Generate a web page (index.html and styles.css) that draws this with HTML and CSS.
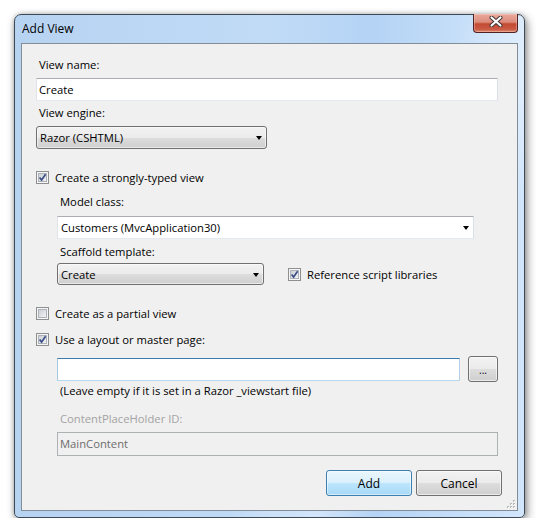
FILE: index.html
```html
<!DOCTYPE html>
<html>
<head>
<meta charset="utf-8">
<title>Add View</title>
<link rel="stylesheet" href="styles.css">
</head>
<body>
<div class="page">
  <div class="window">
    <div class="titlebar">
      <span class="title">Add View</span>
      <div class="close">
        <svg width="14" height="11" viewBox="0 0 14 11">
          <path d="M2.5 1.5 L11.5 9.5 M11.5 1.5 L2.5 9.5" stroke="#3a3030" stroke-width="4" stroke-linecap="round"/>
          <path d="M2.5 1.5 L11.5 9.5 M11.5 1.5 L2.5 9.5" stroke="#ffffff" stroke-width="2.2" stroke-linecap="round"/>
        </svg>
      </div>
    </div>
    <div class="client">
      <div class="lbl m-first">View name:</div>
      <div class="tb w-name m5">Create</div>
      <div class="lbl m4">View engine:</div>
      <div class="dd w-engine m5"><span>Razor (CSHTML)</span><span class="arrow"></span></div>

      <div class="chk m20">
        <svg class="cb" width="13" height="13" viewBox="0 0 13 13"><defs><linearGradient id="g1" x1="0" y1="0" x2="1" y2="1"><stop offset="0" stop-color="#c9cdd4"/><stop offset="1" stop-color="#f4f5f6"/></linearGradient></defs><rect x="0.5" y="0.5" width="12" height="12" fill="#f6f6f6" stroke="#8e8f8f"/><rect x="2.5" y="2.5" width="8" height="8" fill="url(#g1)" stroke="#aeb3b9"/><path d="M3.6 6.4 L5.6 9 L9.6 3.2" fill="none" stroke="#3c4f86" stroke-width="1.7"/></svg>
        <span>Create a strongly-typed view</span>
      </div>

      <div class="indent">
        <div class="lbl m9">Model class:</div>
        <div class="tb combo w-model m6"><span>Customers (MvcApplication30)</span><span class="arrow"></span></div>
        <div class="lbl m5">Scaffold template:</div>
        <div class="scaffold-row m3">
          <div class="dd w-scaffold"><span>Create</span><span class="arrow"></span></div>
          <div class="chk">
            <svg class="cb" width="13" height="13" viewBox="0 0 13 13"><defs><linearGradient id="g2" x1="0" y1="0" x2="1" y2="1"><stop offset="0" stop-color="#c9cdd4"/><stop offset="1" stop-color="#f4f5f6"/></linearGradient></defs><rect x="0.5" y="0.5" width="12" height="12" fill="#f6f6f6" stroke="#8e8f8f"/><rect x="2.5" y="2.5" width="8" height="8" fill="url(#g2)" stroke="#aeb3b9"/><path d="M3.6 6.4 L5.6 9 L9.6 3.2" fill="none" stroke="#3c4f86" stroke-width="1.7"/></svg>
            <span>Reference script libraries</span>
          </div>
        </div>
      </div>

      <div class="chk m20">
        <svg class="cb" width="13" height="13" viewBox="0 0 13 13"><defs><linearGradient id="g3" x1="0" y1="0" x2="1" y2="1"><stop offset="0" stop-color="#c9cdd4"/><stop offset="1" stop-color="#f4f5f6"/></linearGradient></defs><rect x="0.5" y="0.5" width="12" height="12" fill="#f6f6f6" stroke="#8e8f8f"/><rect x="2.5" y="2.5" width="8" height="8" fill="url(#g3)" stroke="#aeb3b9"/></svg>
        <span>Create as a partial view</span>
      </div>

      <div class="chk m10">
        <svg class="cb" width="13" height="13" viewBox="0 0 13 13"><defs><linearGradient id="g4" x1="0" y1="0" x2="1" y2="1"><stop offset="0" stop-color="#c9cdd4"/><stop offset="1" stop-color="#f4f5f6"/></linearGradient></defs><rect x="0.5" y="0.5" width="12" height="12" fill="#f6f6f6" stroke="#8e8f8f"/><rect x="2.5" y="2.5" width="8" height="8" fill="url(#g4)" stroke="#aeb3b9"/><path d="M3.6 6.4 L5.6 9 L9.6 3.2" fill="none" stroke="#3c4f86" stroke-width="1.7"/></svg>
        <span>Use a layout or master page:</span>
      </div>

      <div class="indent">
        <div class="layout-row m9">
          <div class="tb focus w-layout"></div>
          <div class="btn browse">...</div>
        </div>
        <div class="lbl m1">(Leave empty if it is set in a Razor _viewstart file)</div>
        <div class="lbl disabled m12">ContentPlaceHolder ID:</div>
        <div class="tb dis w-main m5">MainContent</div>
      </div>

      <div class="buttons m14">
        <div class="btn default">Add</div>
        <div class="btn">Cancel</div>
      </div>

      <svg class="grip" width="9" height="9" viewBox="0 0 9 9">
        <g fill="#b8b8b8">
          <rect x="7" y="1" width="2" height="2"/>
          <rect x="4" y="4" width="2" height="2"/><rect x="7" y="4" width="2" height="2"/>
          <rect x="1" y="7" width="2" height="2"/><rect x="4" y="7" width="2" height="2"/><rect x="7" y="7" width="2" height="2"/>
        </g>
        <g fill="#ffffff">
          <rect x="8" y="2" width="1" height="1"/>
          <rect x="5" y="5" width="1" height="1"/><rect x="8" y="5" width="1" height="1"/>
          <rect x="2" y="8" width="1" height="1"/><rect x="5" y="8" width="1" height="1"/><rect x="8" y="8" width="1" height="1"/>
        </g>
      </svg>
    </div>
  </div>
</div>
</body>
</html>
```
FILE: styles.css
```css
body {
  margin: 0;
  background: #ffffff;
  font-family: "Open Sans", "Noto Sans", sans-serif;
  font-size: 11.25px;
  color: #000000;
}

.page {
  padding: 14px 0 0 14px;
}

.window {
  width: 511px;
  height: 504px;
  box-sizing: border-box;
  border: 1px solid #3e4a56;
  border-radius: 7px 7px 5px 5px;
  background:
    linear-gradient(115deg, rgba(255,255,255,0) 60%, rgba(255,255,255,0.35) 72%, rgba(255,255,255,0) 80%),
    linear-gradient(to right, #b7d3f2 0%, #c1dbf6 50%, #b4d3f5 70%, #d2e6fb 100%);
  box-shadow: 2px 3px 10px rgba(0, 0, 0, 0.45), 0 0 4px rgba(0, 0, 0, 0.2);
  display: flex;
  flex-direction: column;
  padding: 0 6px 6px 6px;
}

.titlebar {
  height: 28px;
  display: flex;
  justify-content: space-between;
  align-items: flex-start;
}

.title {
  margin-left: 1px;
  line-height: 27px;
  font-size: 12px;
  color: #000;
}

.close {
  width: 45px;
  height: 19px;
  box-sizing: border-box;
  margin-top: -1px;
  border: 1px solid #4e2222;
  border-top: none;
  border-radius: 0 0 4px 4px;
  background: linear-gradient(#e9a99c 0%, #dc8c7c 45%, #c54a32 55%, #c95b45 85%, #e08a6c 100%);
  box-shadow: inset 0 0 0 1px rgba(255, 220, 210, 0.35);
  display: flex;
  align-items: center;
  justify-content: center;
  padding-bottom: 3px;
}

.client {
  flex: 1;
  background: #f0f0f0;
  border: 1px solid #838d97;
  padding: 0 0 0 14px;
  display: flex;
  flex-direction: column;
  align-items: flex-start;
  position: relative;
}

.lbl {
  padding-left: 3px;
  line-height: 16px;
  height: 16px;
  white-space: nowrap;
}

.lbl.disabled {
  color: #a3a3a3;
}

.m-first { margin-top: 13px; }
.m1 { margin-top: 1px; }
.m3 { margin-top: 3px; }
.m4 { margin-top: 4px; }
.m5 { margin-top: 5px; }
.m6 { margin-top: 6px; }
.m9 { margin-top: 9px; }
.m10 { margin-top: 10px; }
.m12 { margin-top: 12px; }
.m14 { margin-top: 14px; }
.m20 { margin-top: 20px; }

.tb {
  height: 23px;
  box-sizing: border-box;
  border: 1px solid;
  border-color: #abadb3 #dbdfe6 #e3e9ef #e2e3ea;
  background: #ffffff;
  padding: 0 2px;
  line-height: 21px;
  white-space: nowrap;
}

.tb.combo {
  display: flex;
  align-items: center;
  justify-content: space-between;
  padding: 0 4px 0 3px;
}

.tb.focus {
  border-color: #3d7bad #b5cfe7 #b7d9ed #a4c9e3;
}

.tb.dis {
  background: #f0f0f0;
  border-color: #adb2b5;
  color: #6d6d6d;
  height: 24px;
  line-height: 22px;
}

.w-name { width: 462px; }
.w-engine { width: 231px; }
.w-model { width: 417px; }
.w-scaffold { width: 207px; }
.w-layout { width: 403px; }
.w-main { width: 441px; }

.dd {
  height: 23px;
  box-sizing: border-box;
  border: 1px solid #707070;
  border-radius: 3px;
  background: linear-gradient(#f2f2f2 0%, #ebebeb 50%, #dddddd 50%, #cfcfcf 100%);
  box-shadow: inset 0 0 0 1px rgba(255, 255, 255, 0.55);
  display: flex;
  align-items: center;
  justify-content: space-between;
  padding: 0 4px 0 3px;
  white-space: nowrap;
}

.w-scaffold { height: 22px; }

.arrow {
  width: 0;
  height: 0;
  border-left: 3.5px solid transparent;
  border-right: 3.5px solid transparent;
  border-top: 4px solid #000000;
  margin-top: 1px;
}

.chk {
  display: flex;
  align-items: center;
  gap: 6px;
  height: 16px;
  white-space: nowrap;
}

.cb {
  flex: none;
  display: block;
}

.indent {
  margin-left: 21px;
  display: flex;
  flex-direction: column;
  align-items: flex-start;
}

.scaffold-row {
  display: flex;
  align-items: center;
  gap: 24px;
}

.layout-row {
  display: flex;
  align-items: center;
  gap: 8px;
}

.btn {
  box-sizing: border-box;
  width: 86px;
  height: 26px;
  border: 1px solid #707070;
  border-radius: 3px;
  background: linear-gradient(#f2f2f2 0%, #ebebeb 50%, #dddddd 50%, #cfcfcf 100%);
  box-shadow: inset 0 0 0 1px rgba(255, 255, 255, 0.6);
  display: flex;
  align-items: center;
  justify-content: center;
  font-size: 12px;
}

.btn.browse {
  width: 30px;
  height: 26px;
  font-size: 10px;
  padding-top: 2px;
}

.btn.default {
  border-color: #3c7fb1;
  background: linear-gradient(#eaf6fd 0%, #d9f0fc 50%, #bee6fd 50%, #a7d9f5 100%);
  box-shadow: inset 0 0 0 1px rgba(255, 255, 255, 0.5);
}

.buttons {
  align-self: flex-end;
  margin-right: 15px;
  display: flex;
  gap: 4px;
}

.grip {
  position: absolute;
  right: 2px;
  bottom: 2px;
}
```
